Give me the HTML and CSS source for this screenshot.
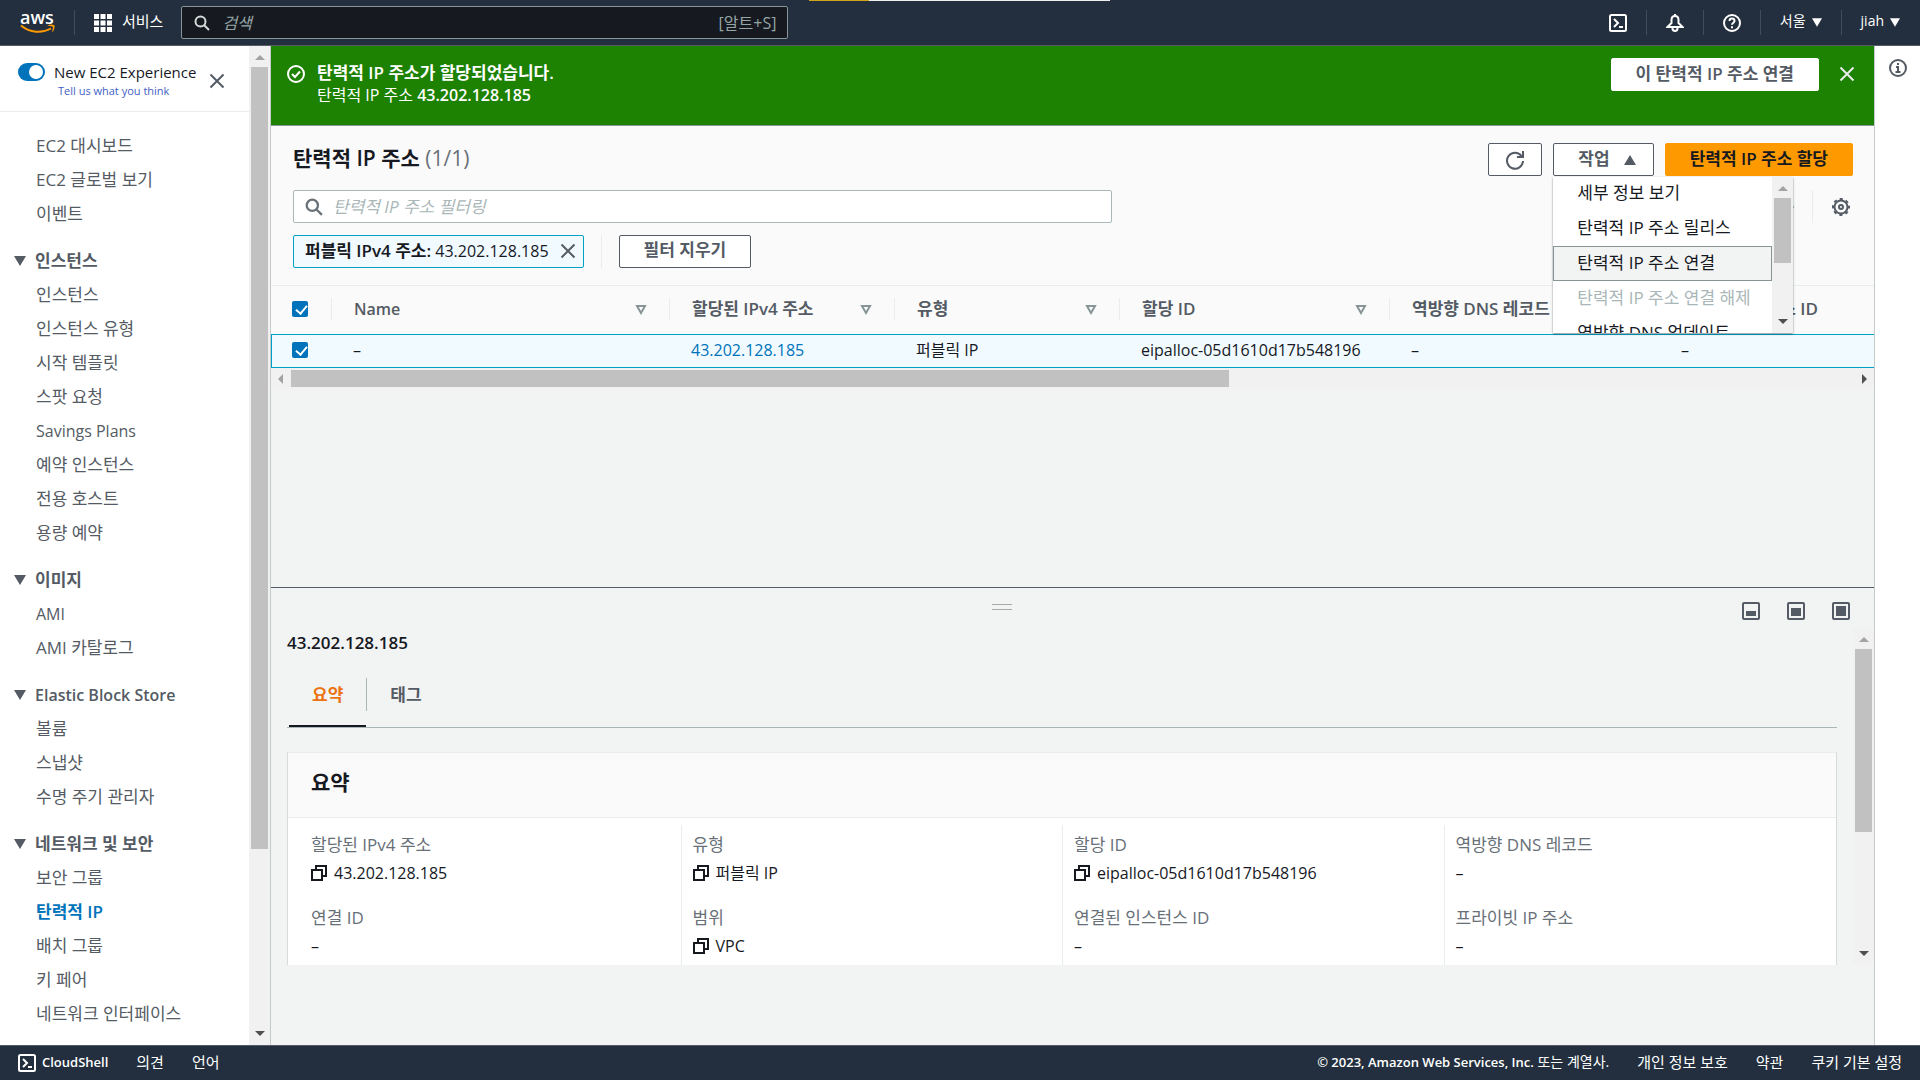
FILE: index.html
```html
<!DOCTYPE html>
<html lang="ko">
<head>
    <meta charset="UTF-8">
    <meta name="viewport" content="width=device-width, initial-scale=1.0">
    <title>탄력적 IP 주소 | EC2</title>
    <link rel="stylesheet" href="styles.css">
</head>
<body>
    <!-- shared icons -->
    <svg class="sprite" width="0" height="0">
        <symbol id="i-search" viewBox="0 0 16 16"><circle cx="6.5" cy="6.5" r="5"/><path d="M10 10l5 5"/></symbol>
        <symbol id="i-close" viewBox="0 0 16 16"><path d="M1.500 1.500l13 13M14.500 1.500l-13 13"/></symbol>
        <symbol id="i-shell" viewBox="0 0 18 18"><rect x="1" y="1" width="16" height="16" rx="1.500"/><path d="M5 5l4 4-4 4M10 13h4"/></symbol>
        <symbol id="i-copy" viewBox="0 0 16 16"><path d="M5 4V1h10v10h-3"/><rect x="1" y="5" width="10" height="10"/></symbol>
        <symbol id="i-down" viewBox="0 0 12 10"><path d="M0 0h12L6 10z"/></symbol>
        <symbol id="i-sort" viewBox="0 0 12 11"><path d="M2 2h8L6 9z"/></symbol>
    </svg>

    <header class="topbar">
        <div class="loading"></div>
        <a href="#" class="logo" aria-label="aws">
            <span>aws</span>
            <svg width="36" height="10" viewBox="0 0 36 10"><path d="M1 1.500c9 7.500 21 8 30 3" fill="none" stroke="#ff9900" stroke-width="2"/><path d="M27 1.500c2.500-1.200 5.500-1.200 7.500-.3.500 2.500-.5 5.500-2.500 7.300.5-2.500 1.200-4.500.8-5.800-1.600-.6-3.600-.8-5.800-1.200z" fill="#ff9900"/></svg>
        </a>
        <i class="line"></i>
        <button class="services">
            <svg width="18" height="18" viewBox="0 0 18 18" fill="#fff"><path d="M0 0h5v5H0zM6.500 0h5v5h-5zM13 0h5v5h-5zM0 6.500h5v5H0zM6.500 6.500h5v5h-5zM13 6.500h5v5h-5zM0 13h5v5H0zM6.500 13h5v5h-5zM13 13h5v5h-5z"/></svg>
            <span>서비스</span>
        </button>
        <label class="search">
            <svg class="icon" width="16" height="16"><use href="#i-search"/></svg>
            <input type="text" placeholder="검색" aria-label="검색">
            <span>[알트+S]</span>
        </label>
        <div class="tools">
            <button aria-label="CloudShell"><svg class="icon" width="18" height="18"><use href="#i-shell"/></svg></button>
            <i class="line"></i>
            <button aria-label="알림"><svg class="icon" width="18" height="18" viewBox="0 0 18 18"><path d="M9 2C6.500 2 5.500 4 5.500 6v3L1.500 13h15l-4-4V6c0-2-1-4-3.500-4zM9 0v3M6.500 13.500v1c0 3.200 5 3.200 5 0v-1"/></svg></button>
            <i class="line"></i>
            <button aria-label="도움말"><svg class="icon" width="18" height="18" viewBox="0 0 18 18"><circle cx="9" cy="9" r="8"/><path d="M6.500 7c0-3.300 5-3.300 5 0 0 1.700-2.500 1.800-2.500 3.800M9 12.200v2"/></svg></button>
            <i class="line"></i>
            <button>서울 <svg width="10" height="9" viewBox="0 0 12 10" fill="#fff"><path d="M0 0h12L6 10z"/></svg></button>
            <i class="line"></i>
            <button>jiah <svg width="10" height="9" viewBox="0 0 12 10" fill="#fff"><path d="M0 0h12L6 10z"/></svg></button>
        </div>
    </header>

    <div class="layout">
        <aside class="sidebar">
            <div class="experience">
                <input type="checkbox" id="newexp" class="toggle" checked>
                <div class="experience_text">
                    <label for="newexp">New EC2 Experience</label>
                    <a href="#">Tell us what you think</a>
                </div>
                <button aria-label="닫기"><svg class="icon" width="16" height="16"><use href="#i-close"/></svg></button>
            </div>
            <nav class="nav">
                <ul>
                    <li><a href="#">EC2 대시보드</a></li>
                    <li><a href="#">EC2 글로벌 보기</a></li>
                    <li><a href="#">이벤트</a></li>
                </ul>
                <h3><svg width="12" height="10"><use href="#i-down"/></svg>인스턴스</h3>
                <ul>
                    <li><a href="#">인스턴스</a></li>
                    <li><a href="#">인스턴스 유형</a></li>
                    <li><a href="#">시작 템플릿</a></li>
                    <li><a href="#">스팟 요청</a></li>
                    <li lang="en"><a href="#">Savings Plans</a></li>
                    <li><a href="#">예약 인스턴스</a></li>
                    <li><a href="#">전용 호스트</a></li>
                    <li><a href="#">용량 예약</a></li>
                </ul>
                <h3><svg width="12" height="10"><use href="#i-down"/></svg>이미지</h3>
                <ul>
                    <li lang="en"><a href="#">AMI</a></li>
                    <li><a href="#">AMI 카탈로그</a></li>
                </ul>
                <h3 lang="en"><svg width="12" height="10"><use href="#i-down"/></svg>Elastic Block Store</h3>
                <ul>
                    <li><a href="#">볼륨</a></li>
                    <li><a href="#">스냅샷</a></li>
                    <li><a href="#">수명 주기 관리자</a></li>
                </ul>
                <h3><svg width="12" height="10"><use href="#i-down"/></svg>네트워크 및 보안</h3>
                <ul>
                    <li><a href="#">보안 그룹</a></li>
                    <li><a href="#" class="active">탄력적 IP</a></li>
                    <li><a href="#">배치 그룹</a></li>
                    <li><a href="#">키 페어</a></li>
                    <li><a href="#">네트워크 인터페이스</a></li>
                </ul>
            </nav>
        </aside>
        <div class="scroll scroll_side"><b class="up"></b><i></i><b class="down"></b></div>

        <main class="main">
            <section class="flash">
                <svg class="icon" width="18" height="18" viewBox="0 0 18 18"><circle cx="9" cy="9" r="8"/><path d="M5 9l3 3 5-5.500"/></svg>
                <div class="flash_text">
                    <strong>탄력적 IP 주소가 할당되었습니다.</strong>
                    <p>탄력적 IP 주소 <b>43.202.128.185</b></p>
                </div>
                <button class="btn">이 탄력적 IP 주소 연결</button>
                <button aria-label="닫기"><svg class="icon" width="16" height="16"><use href="#i-close"/></svg></button>
            </section>

            <section class="list">
                <div class="list_head">
                    <h1>탄력적 IP 주소 <span>(1/1)</span></h1>
                    <button class="btn refresh" aria-label="새로 고침"><svg class="icon" width="20" height="20" viewBox="0 0 20 20"><path d="M16.500 6A8 8 0 1 0 18 11M18 1v6h-6"/></svg></button>
                    <div class="dropdown">
                        <button class="btn">작업 <svg width="12" height="10" viewBox="0 0 12 10"><path d="M0 10h12L6 0z"/></svg></button>
                        <div class="menu">
                            <ul>
                                <li><button>세부 정보 보기</button></li>
                                <li><button>탄력적 IP 주소 릴리스</button></li>
                                <li><button class="hover">탄력적 IP 주소 연결</button></li>
                                <li><button disabled>탄력적 IP 주소 연결 해제</button></li>
                                <li><button>역방향 DNS 업데이트</button></li>
                            </ul>
                            <div class="scroll"><b class="up"></b><i></i><b class="down"></b></div>
                        </div>
                    </div>
                    <button class="btn primary">탄력적 IP 주소 할당</button>
                </div>
                <div class="list_filter">
                    <label class="filter">
                        <svg class="icon" width="18" height="18"><use href="#i-search"/></svg>
                        <input type="text" placeholder="탄력적 IP 주소 필터링" aria-label="탄력적 IP 주소 필터링">
                    </label>
                    <button class="next" aria-label="다음"><svg class="icon" width="8" height="12" viewBox="0 0 8 12"><path d="M1 1l5 5-5 5"/></svg></button>
                    <i class="line"></i>
                    <button aria-label="설정"><svg class="icon" width="18" height="18" viewBox="0 0 18 18"><circle cx="9" cy="9" r="6.500"/><circle cx="9" cy="9" r="8" stroke-dasharray="3.14 3.14" stroke-dashoffset="1.57"/><circle cx="9" cy="9" r="2"/></svg></button>
                </div>
                <div class="tokens">
                    <span class="token"><span><b>퍼블릭 IPv4 주소:</b> 43.202.128.185</span><button aria-label="제거"><svg class="icon" width="16" height="16"><use href="#i-close"/></svg></button></span>
                    <i class="line"></i>
                    <button class="btn">필터 지우기</button>
                </div>
                <div class="table_wrap">
                    <table>
                        <colgroup><col class="c_check"><col class="c_name"><col class="c_mid"><col class="c_mid"><col class="c_wide"><col class="c_wide"><col class="c_last"></colgroup>
                        <thead>
                            <tr>
                                <th><input type="checkbox" aria-label="모두 선택" checked></th>
                                <th lang="en"><div>Name<svg class="icon" width="12" height="11"><use href="#i-sort"/></svg></div></th>
                                <th><div>할당된 IPv4 주소<svg class="icon" width="12" height="11"><use href="#i-sort"/></svg></div></th>
                                <th><div>유형<svg class="icon" width="12" height="11"><use href="#i-sort"/></svg></div></th>
                                <th><div>할당 ID<svg class="icon" width="12" height="11"><use href="#i-sort"/></svg></div></th>
                                <th><div>역방향 DNS 레코드<svg class="icon" width="12" height="11"><use href="#i-sort"/></svg></div></th>
                                <th><div>연결된 인스턴스 ID<svg class="icon" width="12" height="11"><use href="#i-sort"/></svg></div></th>
                            </tr>
                        </thead>
                        <tbody>
                            <tr>
                                <td><input type="checkbox" aria-label="43.202.128.185 선택" checked></td>
                                <td>–</td>
                                <td><a href="#">43.202.128.185</a></td>
                                <td>퍼블릭 IP</td>
                                <td>eipalloc-05d1610d17b548196</td>
                                <td>–</td>
                                <td>–</td>
                            </tr>
                        </tbody>
                    </table>
                </div>
                <div class="scroll scroll_x"><b class="left"></b><i></i><b class="right"></b></div>
            </section>

            <section class="panel">
                <div class="panel_bar">
                    <div class="handle"></div>
                    <button aria-label="작게"><svg class="icon" width="18" height="18" viewBox="0 0 18 18"><rect x="1" y="1" width="16" height="16" rx="1"/><path class="fill" d="M4 9h10v5H4z"/></svg></button>
                    <button aria-label="중간"><svg class="icon" width="18" height="18" viewBox="0 0 18 18"><rect x="1" y="1" width="16" height="16" rx="1"/><path class="fill" d="M4 6h10v8H4z"/></svg></button>
                    <button aria-label="크게"><svg class="icon" width="18" height="18" viewBox="0 0 18 18"><rect x="1" y="1" width="16" height="16" rx="1"/><path class="fill" d="M4 4h10v10H4z"/></svg></button>
                </div>
                <div class="panel_body">
                    <div class="panel_content">
                        <h2>43.202.128.185</h2>
                        <div class="tabs">
                            <button class="on">요약</button>
                            <i class="line"></i>
                            <button>태그</button>
                        </div>
                        <div class="card">
                            <h1>요약</h1>
                            <div class="card_grid">
                                <dl>
                                    <dt>할당된 IPv4 주소</dt>
                                    <dd><svg class="icon" width="16" height="16"><use href="#i-copy"/></svg>43.202.128.185</dd>
                                    <dt>연결 ID</dt>
                                    <dd>–</dd>
                                </dl>
                                <dl>
                                    <dt>유형</dt>
                                    <dd><svg class="icon" width="16" height="16"><use href="#i-copy"/></svg>퍼블릭 IP</dd>
                                    <dt>범위</dt>
                                    <dd><svg class="icon" width="16" height="16"><use href="#i-copy"/></svg>VPC</dd>
                                </dl>
                                <dl>
                                    <dt>할당 ID</dt>
                                    <dd><svg class="icon" width="16" height="16"><use href="#i-copy"/></svg>eipalloc-05d1610d17b548196</dd>
                                    <dt>연결된 인스턴스 ID</dt>
                                    <dd>–</dd>
                                </dl>
                                <dl>
                                    <dt>역방향 DNS 레코드</dt>
                                    <dd>–</dd>
                                    <dt>프라이빗 IP 주소</dt>
                                    <dd>–</dd>
                                </dl>
                            </div>
                        </div>
                    </div>
                    <div class="scroll scroll_panel"><b class="up"></b><i></i><b class="down"></b></div>
                </div>
            </section>
        </main>

        <aside class="rail">
            <button aria-label="정보"><svg class="icon" width="18" height="18" viewBox="0 0 18 18"><circle cx="9" cy="9" r="8"/><path d="M9 4v2M7 8h2v5M6.500 13h5"/></svg></button>
        </aside>
    </div>

    <footer class="footer">
        <a href="#"><svg class="icon" width="18" height="18"><use href="#i-shell"/></svg><b>CloudShell</b></a>
        <a href="#">의견</a>
        <a href="#">언어</a>
        <span><b>© 2023, Amazon Web Services, Inc.</b> 또는 계열사.</span>
        <a href="#">개인 정보 보호</a>
        <a href="#">약관</a>
        <a href="#">쿠키 기본 설정</a>
    </footer>
</body>
</html>
```
FILE: styles.css
```css
*{
    box-sizing: border-box;
}
body{
    margin: 0;
    height: 100vh;
    display: flex;
    flex-direction: column;
    overflow: hidden;
    font: 16px/22px "Open Sans", "Noto Sans CJK KR", sans-serif;
    color: #16191f;
    background: #f2f3f3;
}
h1,h2,h3,ul,p,dl,dd{
    margin: 0;
    padding: 0;
}
ul{
    list-style: none;
}
a{
    text-decoration: none;
    color: inherit;
}
b,strong,h1,h2,h3,th{
    font-weight: 600;
}
button,input{
    font: inherit;
    color: inherit;
}
button{
    display: flex;
    align-items: center;
    padding: 0;
    border: 0;
    background: none;
    white-space: nowrap;
}
input::placeholder{
    font-style: italic;
    color: #aab7b8;
    opacity: 1;
}
.sprite{
    position: absolute;
}
.icon{
    flex: none;
    fill: none;
    stroke: currentColor;
    stroke-width: 2;
}
.icon .fill{
    fill: currentColor;
    stroke: none;
}
.line{
    flex: none;
    width: 1px;
    height: 33px;
    background: #eaeded;
}

/* top bar */
.topbar{
    flex: none;
    position: relative;
    height: 46px;
    padding: 0 20px 4px;
    display: flex;
    align-items: center;
    background: #232f3e;
    border-bottom: 1px solid #545b64;
    color: #fff;
    font-size: 14px;
}
.topbar .line{
    height: 25px;
    margin-top: 4px;
    background: #414d5c;
}
.loading{
    position: absolute;
    top: 0;
    left: 809px;
    width: 301px;
    height: 1px;
    background: linear-gradient(90deg, #d1a41f 60px, #eee 60px);
}
.logo{
    width: 54px;
    padding-top: 2px;
}
.logo span{
    display: block;
    height: 14px;
    font-size: 18px;
    line-height: 14px;
    font-weight: 600;
}
.logo svg{
    display: block;
}
.services{
    gap: 10px;
    margin: 0 18px 0 19px;
    font-size: 15px;
}
.services svg{
    margin-top: 4px;
}
.topbar .search{
    margin-top: 4px;
    width: 607px;
    height: 33px;
    padding: 0 11px 0 12px;
    display: flex;
    align-items: center;
    gap: 12px;
    background: #16191f;
    border: 1px solid #879596;
    border-radius: 2px;
    font-size: 16px;
    color: #95a5a6;
}
.search .icon{
    color: #d5dbdb;
}
.search input,.filter input{
    flex: 1;
    min-width: 0;
    padding: 0;
    border: 0;
    outline: 0;
    background: none;
}
.search input::placeholder{
    color: #95a5a6;
}
.tools{
    margin-left: auto;
    display: flex;
    align-items: center;
    gap: 19px;
}
.tools button{
    gap: 6px;
}
.tools svg{
    margin-top: 4px;
}

.layout{
    flex: 1;
    min-height: 0;
    display: flex;
}

/* sidebar */
.sidebar{
    flex: none;
    width: 249px;
    background: #fff;
    color: #545b64;
    overflow: hidden;
}
.experience{
    height: 66px;
    padding: 4px 24px 0 18px;
    display: flex;
    align-items: center;
    border-bottom: 1px solid #eaeded;
}
.experience_text{
    flex: 1;
    padding-left: 9px;
    color: #16191f;
    white-space: nowrap;
}
.experience_text label{
    display: block;
    font-size: 15px;
    line-height: 20px;
}
.experience_text a{
    display: block;
    padding-left: 4px;
    font-size: 11px;
    line-height: 18px;
    color: #3f5fc4;
}
.toggle{
    appearance: none;
    width: 27px;
    height: 18px;
    margin: 0 0 17px;
    padding: 2px;
    border-radius: 9px;
    background: #0073bb;
}
.toggle::after{
    content: "";
    display: block;
    width: 14px;
    height: 14px;
    margin-left: 9px;
    border-radius: 50%;
    background: #fff;
}
.nav{
    padding-top: 17px;
}
.nav li,.nav h3{
    height: 34px;
    line-height: 34px;
    font-size: 17px;
}
.nav li{
    padding-left: 36px;
}
.nav h3{
    margin-top: 13px;
    padding-left: 14px;
    display: flex;
    align-items: center;
    gap: 9px;
}
.nav h3 svg{
    fill: #545b64;
}
.nav .active{
    color: #0073bb;
    font-weight: 600;
}
.nav :lang(en),th:lang(en){
    font-size: 16px;
}

/* scroll bars */
.scroll{
    flex: none;
    width: 21px;
    padding: 7px 2px;
    display: flex;
    flex-direction: column;
    align-items: center;
    background: #f1f1f1;
}
.scroll i{
    width: 17px;
    background: #c1c1c1;
}
.scroll b{
    border: 5px solid transparent;
}
.scroll .up{
    border-top: 0;
    border-bottom-color: #a3a3a3;
    margin: 2px 0 7px;
}
.scroll .down{
    border-bottom: 0;
    border-top-color: #505050;
    margin-top: auto;
    margin-bottom: 2px;
}
.scroll_side i{
    height: 782px;
}
.scroll_x{
    width: auto;
    height: 21px;
    padding: 2px 7px;
    flex-direction: row;
}
.scroll_x i{
    width: 59%;
    height: 17px;
}
.scroll .left{
    border-left: 0;
    border-right-color: #a3a3a3;
    margin-right: 8px;
}
.scroll .right{
    border-right: 0;
    border-left-color: #505050;
    margin-left: auto;
}
.scroll_panel i{
    height: 183px;
}

/* main column */
.main{
    flex: 1;
    min-width: 0;
    display: flex;
    flex-direction: column;
    border-left: 1px solid #c5cbcb;
    border-right: 1px solid #c5cbcb;
}
.flash{
    min-height: 80px;
    padding: 12px 19px 12px 16px;
    display: flex;
    align-items: flex-start;
    background: #1d8102;
    border-bottom: 1px solid #879596;
    color: #fff;
}
.flash .icon{
    margin-top: 7px;
}
.flash button .icon{
    margin-top: 8px;
    color: #eaeded;
}
.flash_text{
    flex: 1;
    padding: 4px 0 0 12px;
}
.flash strong{
    font-size: 17px;
}
.flash .btn{
    margin-right: 20px;
    border-color: #fff;
}
.btn{
    height: 33px;
    padding: 0 24px 2px;
    border: 1px solid #545b64;
    border-radius: 2px;
    background: #fff;
    color: #545b64;
    font-size: 17px;
    font-weight: 600;
}
.primary{
    border-color: #ff9900;
    background: #ff9900;
    color: #16191f;
}
.list{
    flex: none;
    height: 461px;
}
.list_head,.list_filter,.tokens{
    display: flex;
    align-items: center;
    padding: 0 21px 0 22px;
    background: #fafafa;
}
.list_head{
    height: 64px;
    padding-top: 3px;
    gap: 11px;
}
h1{
    flex: 1;
    font-size: 21px;
    line-height: 30px;
}
h1 span{
    font-weight: 400;
    color: #687078;
}
.list_head h1{
    padding-bottom: 4px;
}
.list_head .refresh{
    padding: 0 16px;
}
.dropdown{
    position: relative;
}
.dropdown .btn{
    gap: 14px;
    padding-right: 17px;
}
.dropdown .btn svg{
    margin-top: 3px;
    fill: #545b64;
}
.menu{
    position: absolute;
    top: 34px;
    left: 0;
    width: 240px;
    height: 156px;
    display: flex;
    overflow: hidden;
    background: #fff;
    box-shadow: 0 1px 2px rgba(0,28,36,.5);
    font-size: 17px;
}
.menu ul{
    flex: 1;
    margin-top: -1px;
}
.menu li button{
    width: 100%;
    height: 35px;
    padding: 0 0 2px 23px;
    border: 1px solid transparent;
}
.menu li .hover{
    background: #f2f3f3;
    border-color: #879596;
}
.menu li button:disabled{
    color: #aab7b8;
}
.menu .scroll i{
    height: 65px;
}
.list_filter{
    height: 33px;
}
.filter{
    width: 819px;
    height: 33px;
    margin-right: auto;
    padding: 0 11px;
    display: flex;
    align-items: center;
    gap: 10px;
    border: 1px solid #aab7b8;
    border-radius: 2px;
    background: #fff;
    color: #687078;
    font-size: 17px;
}
.list_filter .line{
    margin: 0 19px 0 17px;
}
.list_filter button{
    color: #545b64;
}
.list_filter .next{
    color: #aab7b8;
}
.list_filter button:last-child{
    margin-right: 3px;
}
.tokens{
    height: 63px;
    padding-bottom: 6px;
    gap: 17px;
    border-bottom: 1px solid #eaeded;
}
.token{
    height: 33px;
    padding: 0 7px 0 11px;
    display: flex;
    align-items: center;
    gap: 11px;
    border: 1px solid #00a1c9;
    border-radius: 2px;
    background: #f1faff;
}
.token b{
    font-size: 17px;
}
.token button{
    color: #545b64;
}
.table_wrap{
    overflow: hidden;
}
table{
    width: 1638px;
    table-layout: fixed;
    border-collapse: collapse;
}
.c_check{
    width: 60px;
}
.c_name{
    width: 338px;
}
.c_mid{
    width: 225px;
}
.c_wide{
    width: 270px;
}
.c_last{
    width: 250px;
}
th,td{
    padding: 0 22px 2px;
    text-align: left;
    white-space: nowrap;
}
th:first-child,td:first-child{
    padding-left: 21px;
}
thead tr{
    height: 48px;
    background: #fafafa;
    color: #545b64;
    font-size: 17px;
}
th div{
    margin: 0 -22px;
    padding: 0 22px;
    display: flex;
    align-items: center;
    justify-content: space-between;
    border-left: 1px solid #eaeded;
}
th .icon{
    color: #879596;
}
tbody tr{
    height: 34px;
    background: #f1faff;
    outline: 1px solid #00a1c9;
    outline-offset: -1px;
}
td a{
    color: #0073bb;
}
table input{
    appearance: none;
    display: block;
    width: 16px;
    height: 16px;
    margin: 0;
    border-radius: 2px;
    background: #0073bb;
}
table input::after{
    content: "";
    display: block;
    width: 5px;
    height: 9px;
    margin: 2px 0 0 6px;
    border: solid #fff;
    border-width: 0 2px 2px 0;
    transform: rotate(40deg);
}

/* detail panel */
.panel{
    border-top: 1px solid #545b64;
}
.panel_bar{
    height: 40px;
    padding: 5px 24px 0 0;
    display: flex;
    align-items: center;
    justify-content: flex-end;
    gap: 27px;
    color: #545b64;
}
.handle{
    width: 20px;
    height: 6px;
    margin: 0 703px 8px 0;
    border: solid #aaa;
    border-width: 1px 0;
}
.panel_body{
    height: 337px;
    display: flex;
    overflow: hidden;
}
.panel_content{
    flex: 1;
    padding: 0 16px;
    overflow: hidden;
}
h2{
    padding-top: 4px;
    font-size: 17px;
}
.tabs{
    margin: 16px 0 24px;
    height: 58px;
    display: flex;
    border-bottom: 1px solid #aab7b8;
}
.tabs button{
    height: 57px;
    padding: 0 23px 8px;
    color: #545b64;
    font-size: 17px;
    font-weight: 600;
}
.tabs .on{
    margin-left: 2px;
    padding-bottom: 6px;
    color: #ec7211;
    border-bottom: 2px solid #16191f;
}
.tabs .line{
    margin-top: 8px;
    background: #aab7b8;
}
.card{
    background: #fff;
    border: 1px solid #d5dbdb;
    border-top-color: #eaeded;
}
.card h1{
    padding: 14px 23px 20px;
    background: #fafafa;
    border-bottom: 1px solid #eaeded;
}
.card_grid{
    padding: 7px 11px;
    display: grid;
    grid-template-columns: repeat(4, 1fr);
}
dl{
    height: 200px;
    padding: 9px 11px;
    border-left: 1px solid #eaeded;
}
dl:first-child{
    border-left-color: transparent;
}
dt{
    font-size: 17px;
    color: #687078;
}
dd{
    height: 22px;
    margin: 6px 0 23px;
    display: flex;
    align-items: center;
    gap: 7px;
}
.rail{
    flex: none;
    width: 45px;
    padding: 13px 14px;
    background: #fff;
    color: #545b64;
}

.footer{
    flex: none;
    height: 35px;
    padding: 0 18px 2px;
    display: flex;
    align-items: center;
    gap: 28px;
    background: #232f3e;
    border-top: 1px solid #545b64;
    color: #fff;
    font-size: 15px;
}
.footer a{
    display: flex;
    align-items: center;
    gap: 6px;
}
.footer svg{
    margin-top: 2px;
}
.footer span{
    margin-left: auto;
    font-size: 14px;
}
.footer b{
    font-size: 13px;
}
```
